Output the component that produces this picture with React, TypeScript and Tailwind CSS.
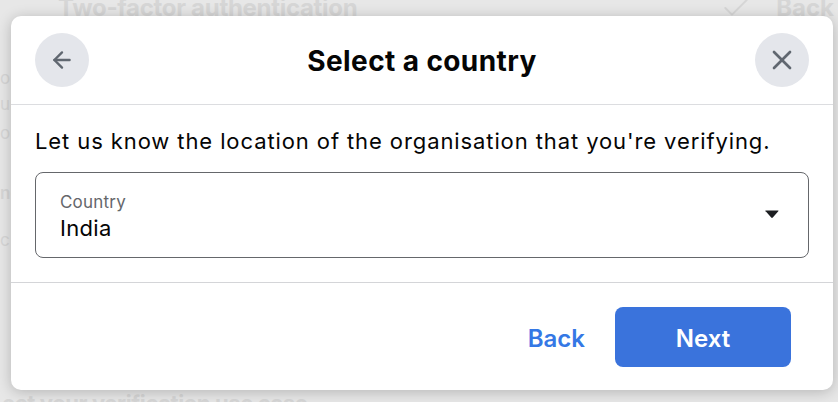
import { ArrowLeft, X, Check } from "lucide-react";

export default function App() {
  return (
    <div
      className="relative w-[838px] h-[402px] overflow-hidden bg-[#e7e7e7]"
      style={{ fontFamily: "Inter, 'Noto Sans', sans-serif" }}
    >
      {/* faded page behind the dialog */}
      <div className="absolute inset-0 flex flex-col justify-between text-[#d6d6d6]">
        <div className="flex items-center h-[16px] pl-[58px] pr-[4px]">
          <span className="text-[24px] font-bold tracking-[-0.3px] leading-none">
            Two-factor authentication
          </span>
          <Check className="ml-auto mr-[24px] w-[32px] h-[32px]" strokeWidth={1.5} />
          <span className="text-[24px] font-bold leading-none">Back</span>
        </div>
        <div className="flex flex-1 flex-col pt-[50px] text-[17px] leading-[24px]">
          <span>o</span>
          <span className="mt-[2px]">ur</span>
          <span className="mt-[5px]">or</span>
          <span className="mt-[36px] font-semibold">nc</span>
          <span className="mt-[23px]">c</span>
        </div>
        <div className="h-[12px] pl-[2px]">
          <span className="block text-[22px] font-bold leading-[26px] tracking-[-0.4px]">
            ect your verification use case
          </span>
        </div>
      </div>

      {/* dialog */}
      <div className="relative ml-[11px] mt-[16px] w-[822px] rounded-[10px] bg-white shadow-[0_2px_14px_rgba(0,0,0,0.22)]">
        {/* header */}
        <div className="flex h-[89px] items-center justify-between border-b border-[#dcdde0] px-[24px]">
          <button className="flex h-[54px] w-[54px] items-center justify-center rounded-full bg-[#e4e6eb] text-[#606770]">
            <ArrowLeft className="h-[26px] w-[26px]" strokeWidth={2.2} />
          </button>
          <h1 className="pt-[2px] text-[28px] font-bold text-[#050505] tracking-[0.4px]">
            Select a country
          </h1>
          <button className="flex h-[54px] w-[54px] items-center justify-center rounded-full bg-[#e4e6eb] text-[#606770]">
            <X className="h-[32px] w-[32px]" strokeWidth={2} />
          </button>
        </div>

        {/* body */}
        <div className="border-b border-[#d4d5d8] px-[24px] pt-[22px] pb-[24px]">
          <p className="text-[22px] leading-[28px] tracking-[0.9px] text-[#050505]">
            Let us know the location of the organisation that you're verifying.
          </p>
          <div className="mt-[17px] flex h-[86px] items-center justify-between rounded-[8px] border border-[#65676b] pl-[24px] pr-[28px]">
            <div className="flex flex-col pt-[3px]">
              <span className="text-[17px] leading-[22px] tracking-[0.2px] text-[#65676b]">Country</span>
              <span className="text-[22px] leading-[30px] tracking-[0.3px] text-[#050505]">India</span>
            </div>
            <svg width="16" height="10" viewBox="0 0 16 10" className="text-[#1c1e21]">
              <path d="M1 1.5 Q1 0.5 2 0.5 H14 Q15 0.5 14.3 1.3 L8.8 7.6 Q8 8.5 7.2 7.6 L1.7 1.3 Z" fill="currentColor" />
            </svg>
          </div>
        </div>

        {/* footer */}
        <div className="flex items-center justify-end gap-[30px] pt-[24px] pb-[23px] pr-[42px]">
          <button className="pt-[3px] text-[24px] font-semibold text-[#3578e5]">Back</button>
          <button className="flex h-[60px] w-[176px] items-center justify-center rounded-[8px] bg-[#3a73dc] pt-[3px] text-[24px] font-semibold text-white">
            Next
          </button>
        </div>
      </div>
    </div>
  );
}
